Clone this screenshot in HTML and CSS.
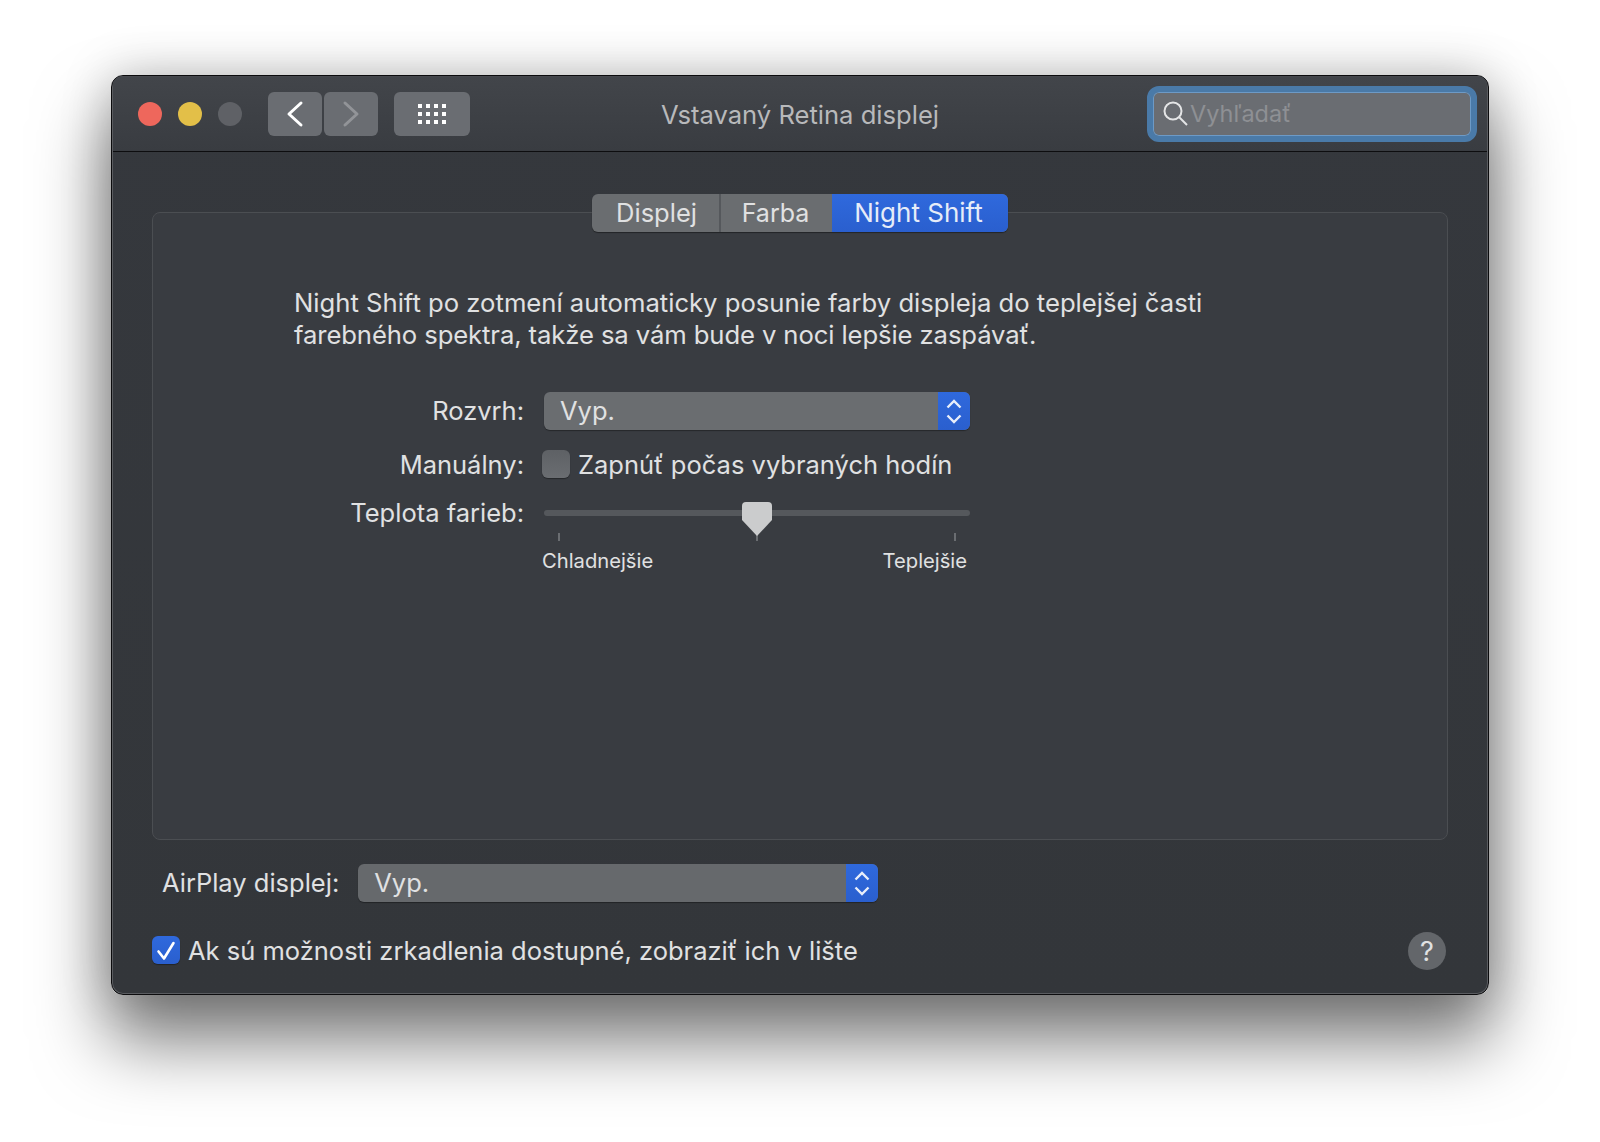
FILE: index.html
```html
<!DOCTYPE html>
<html lang="sk">
<head>
    <meta charset="UTF-8">
    <meta name="viewport" content="width=device-width, initial-scale=1.0">
    <title>Vstavaný Retina displej</title>
    <link rel="stylesheet" href="styles.css">
</head>
<body>
    <div class="window">
        <header class="titlebar">
            <div class="toolbar">
                <div class="lights">
                    <span class="light light-red"></span>
                    <span class="light light-yellow"></span>
                    <span class="light light-off"></span>
                </div>
                <div class="nav">
                    <button class="tool-btn">
                        <svg width="54" height="44" viewBox="0 0 54 44"><path d="M33 11 L21 22 L33 33" class="chevron"/></svg>
                    </button>
                    <button class="tool-btn">
                        <svg width="54" height="44" viewBox="0 0 54 44"><path d="M21 11 L33 22 L21 33" class="chevron chevron-off"/></svg>
                    </button>
                </div>
                <button class="tool-btn tool-btn-wide">
                    <svg width="28" height="20" viewBox="0 0 28 20" fill="#fff">
                        <rect x="0" y="0" width="4" height="4"/><rect x="8" y="0" width="4" height="4"/><rect x="16" y="0" width="4" height="4"/><rect x="24" y="0" width="4" height="4"/>
                        <rect x="0" y="8" width="4" height="4"/><rect x="8" y="8" width="4" height="4"/><rect x="16" y="8" width="4" height="4"/><rect x="24" y="8" width="4" height="4"/>
                        <rect x="0" y="16" width="4" height="4"/><rect x="8" y="16" width="4" height="4"/><rect x="16" y="16" width="4" height="4"/><rect x="24" y="16" width="4" height="4"/>
                    </svg>
                </button>
            </div>
            <div class="window-title">Vstavaný Retina displej</div>
            <div class="search">
                <svg width="26" height="26" viewBox="0 0 26 26" class="search-icon">
                    <circle cx="10" cy="10" r="8.5"/>
                    <path d="M16 16 L24 24"/>
                </svg>
                <span class="search-text">Vyhľadať</span>
            </div>
        </header>

        <main class="content">
            <section class="panel">
                <div class="tabs">
                    <span class="tab tab-displej">Displej</span>
                    <span class="tab tab-farba">Farba</span>
                    <span class="tab tab-active">Night Shift</span>
                </div>

                <p class="intro">Night Shift po zotmení automaticky posunie farby displeja do teplejšej časti<br><span class="intro-tight">farebného spektra, takže sa vám bude v noci lepšie zaspávať.</span></p>

                <div class="form">
                    <div class="form-row">
                        <span class="form-label">Rozvrh:</span>
                        <div class="select select-schedule">
                            <span class="select-value">Vyp.</span>
                            <span class="select-arrows">
                                <svg width="32" height="38" viewBox="0 0 32 38"><path d="M9.5 15.5 L16 9 L22.5 15.5"/><path d="M9.5 23.5 L16 30 L22.5 23.5"/></svg>
                            </span>
                        </div>
                    </div>
                    <div class="form-row form-row-check">
                        <span class="form-label">Manuálny:</span>
                        <label class="check">
                            <span class="checkbox"></span>
                            <span>Zapnúť počas vybraných hodín</span>
                        </label>
                    </div>
                    <div class="form-row form-row-slider">
                        <span class="form-label">Teplota farieb:</span>
                        <div class="slider">
                            <div class="slider-track"></div>
                            <svg class="slider-thumb" width="30" height="34" viewBox="0 0 30 34"><path d="M4 0 H26 Q30 0 30 4 V18 L15 34 L0 18 V4 Q0 0 4 0 Z"/></svg>
                            <div class="slider-ticks"><i></i><i></i><i></i></div>
                            <div class="slider-labels"><span>Chladnejšie</span><span>Teplejšie</span></div>
                        </div>
                    </div>
                </div>
            </section>

            <div class="airplay">
                <span class="airplay-label">AirPlay displej:</span>
                <div class="select select-airplay">
                    <span class="select-value">Vyp.</span>
                    <span class="select-arrows">
                        <svg width="32" height="38" viewBox="0 0 32 38"><path d="M9.5 15.5 L16 9 L22.5 15.5"/><path d="M9.5 23.5 L16 30 L22.5 23.5"/></svg>
                    </span>
                </div>
            </div>

            <div class="footer">
                <label class="check check-mirror">
                    <span class="checkbox checkbox-on">
                        <svg width="28" height="28" viewBox="0 0 28 28"><path d="M6.5 15.5 L12 22.5 L21.5 7"/></svg>
                    </span>
                    <span>Ak sú možnosti zrkadlenia dostupné, zobraziť ich v lište</span>
                </label>
                <span class="help">?</span>
            </div>
        </main>
    </div>
</body>
</html>
```

FILE: styles.css
```css
:root {
    --text: #e0e1e2;
    --blue: #2b63d8;
    --control: #6a6d70;
}

* {
    box-sizing: border-box;
}

body {
    margin: 0;
    height: 1142px;
    overflow: hidden;
    background: #ffffff;
    font-family: 'Inter', 'Noto Sans', sans-serif;
    font-size: 25.5px;
    color: var(--text);
}

.window {
    width: 1378px;
    height: 920px;
    margin: 75px 0 0 111px;
    border: 1px solid #0c0c0e;
    border-radius: 12px;
    background: linear-gradient(#35383d, #33363a);
    box-shadow: 0 44px 70px 4px rgba(0,0,0,0.5), 0 0 50px rgba(0,0,0,0.22), inset 0 0 0 1px #5a5c60;
    overflow: hidden;
}

.titlebar {
    height: 76px;
    display: grid;
    grid-template-columns: 1fr auto 1fr;
    align-items: center;
    padding: 0 10px;
    background: linear-gradient(#42454a, #393c41);
    border-top: 1px solid #47494e;
    border-bottom: 1px solid #0d0d0f;
    margin: 0 1px;
}

.toolbar {
    display: flex;
    align-items: center;
    padding-left: 15px;
}

.lights {
    display: flex;
    gap: 16px;
}

.light {
    width: 24px;
    height: 24px;
    border-radius: 50%;
}

.light-red { background: #ee675c; }
.light-yellow { background: #e3bf48; }
.light-off { background: #5f6166; }

.nav {
    display: flex;
    gap: 2px;
    margin: 0 16px 0 26px;
}

.tool-btn {
    width: 54px;
    height: 44px;
    padding: 0;
    border: none;
    border-radius: 6px;
    background: #6a6d72;
    display: flex;
    align-items: center;
    justify-content: center;
}

.tool-btn-wide {
    width: 76px;
}

.chevron {
    fill: none;
    stroke: #ffffff;
    stroke-width: 3;
    stroke-linecap: round;
    stroke-linejoin: round;
}

.chevron-off {
    stroke: #929498;
}

.window-title {
    color: #b8b9bb;
    font-size: 25.6px;
    white-space: nowrap;
}

.search {
    justify-self: end;
    width: 330px;
    height: 56px;
    display: flex;
    align-items: center;
    padding-left: 10px;
    border: 6px solid #4a7aa8;
    border-radius: 12px;
    background: #6a6d72;
    box-shadow: inset 0 0 0 1px #6d9ac6;
}

.search-icon {
    flex: none;
    fill: none;
    stroke: #e4e5e6;
    stroke-width: 2;
}

.search-text {
    margin: -2px 0 0 1px;
    color: #8e9094;
    font-size: 23.5px;
}

.content {
    padding: 42px 40px 0;
}

.panel {
    height: 628px;
    margin-top: 18px;
    border: 1px solid #4b4e52;
    border-radius: 8px;
    background: #393c41;
    display: flex;
    flex-direction: column;
}

.tabs {
    align-self: center;
    display: flex;
    height: 38px;
    margin-top: -19px;
    border-radius: 6px;
    overflow: hidden;
    background: var(--control);
    box-shadow: 0 1px 1px rgba(0,0,0,0.4);
}

.tab {
    display: flex;
    align-items: center;
    justify-content: center;
    padding-bottom: 1px;
}

.tab-displej {
    width: 129px;
    padding-left: 2px;
    border-right: 2px solid #55585c;
}

.tab-farba {
    width: 111px;
    padding-right: 2px;
    font-size: 25px;
}

.tab-active {
    width: 176px;
    padding-right: 3px;
    background: linear-gradient(#2f69dd, #2a5fce);
    color: #e6ecf8;
    font-size: 26px;
}

.intro {
    margin: 55px 0 0 141px;
    font-size: 25.65px;
    line-height: 32px;
    white-space: nowrap;
}

.intro-tight {
    letter-spacing: -0.1px;
}

.form {
    margin-top: 41px;
}

.form-row {
    display: flex;
    align-items: center;
}

.form-label {
    width: 230px;
    margin: 0 20px 0 141px;
    padding-bottom: 2px;
    flex: none;
    text-align: right;
    white-space: nowrap;
}

.select {
    height: 38px;
    display: flex;
    align-items: center;
    justify-content: space-between;
    border-radius: 6px;
    overflow: hidden;
    background: var(--control);
    box-shadow: 0 1px 1px rgba(0,0,0,0.35);
}

.select-schedule {
    width: 426px;
}

.select-airplay {
    width: 520px;
    background: #66696c;
}

.select-value {
    padding: 0 0 2px 16px;
}

.select-arrows {
    width: 32px;
    height: 38px;
    background: linear-gradient(#2f69dd, #2a5fce);
}

.select-arrows svg {
    display: block;
    fill: none;
    stroke: #e8eefa;
    stroke-width: 2.4;
}

.form-row-check {
    height: 28px;
    margin-top: 20px;
}

.form-row-check .form-label {
    padding-bottom: 0;
}

.check {
    display: flex;
    align-items: center;
    gap: 8px;
    white-space: nowrap;
}

.form-row-check .check {
    margin-left: -2px;
}

.check-mirror {
    margin-bottom: 2px;
}

.checkbox {
    width: 28px;
    height: 28px;
    flex: none;
    border-radius: 6px;
    background: linear-gradient(#5e6165, #6a6d71);
    box-shadow: 0 1px 1px rgba(0,0,0,0.35);
}

.checkbox-on {
    background: linear-gradient(#2f69dd, #2a5fce);
}

.checkbox-on svg {
    display: block;
    fill: none;
    stroke: #ffffff;
    stroke-width: 2.6;
    stroke-linecap: round;
    stroke-linejoin: round;
}

.form-row-slider {
    align-items: flex-start;
    margin-top: 18px;
}

.form-row-slider .form-label {
    padding: 1px 0 0;
    line-height: 32px;
}

.slider {
    position: relative;
    width: 426px;
    padding-top: 14px;
}

.slider-track {
    height: 6px;
    border-radius: 3px;
    background: #55585c;
}

.slider-thumb {
    position: absolute;
    top: 6px;
    left: 198px;
    fill: #cbcccd;
}

.slider-ticks {
    display: flex;
    justify-content: space-between;
    height: 8px;
    margin-top: 17px;
    padding: 0 14px 0 14px;
}

.slider-ticks i {
    width: 2px;
    background: #6a6d71;
}

.slider-labels {
    display: flex;
    justify-content: space-between;
    margin: 8px 3px 0 -2px;
    font-size: 20.2px;
    line-height: 24px;
}

.airplay {
    display: flex;
    align-items: center;
    gap: 19px;
    margin-top: 24px;
    padding-left: 10px;
}

.airplay-label {
    padding-bottom: 2px;
}

.footer {
    display: flex;
    align-items: center;
    justify-content: space-between;
    margin-top: 30px;
    padding-right: 2px;
}

.help {
    width: 38px;
    height: 38px;
    display: flex;
    align-items: center;
    justify-content: center;
    border-radius: 50%;
    background: #63666a;
    font-size: 27px;
}
```
